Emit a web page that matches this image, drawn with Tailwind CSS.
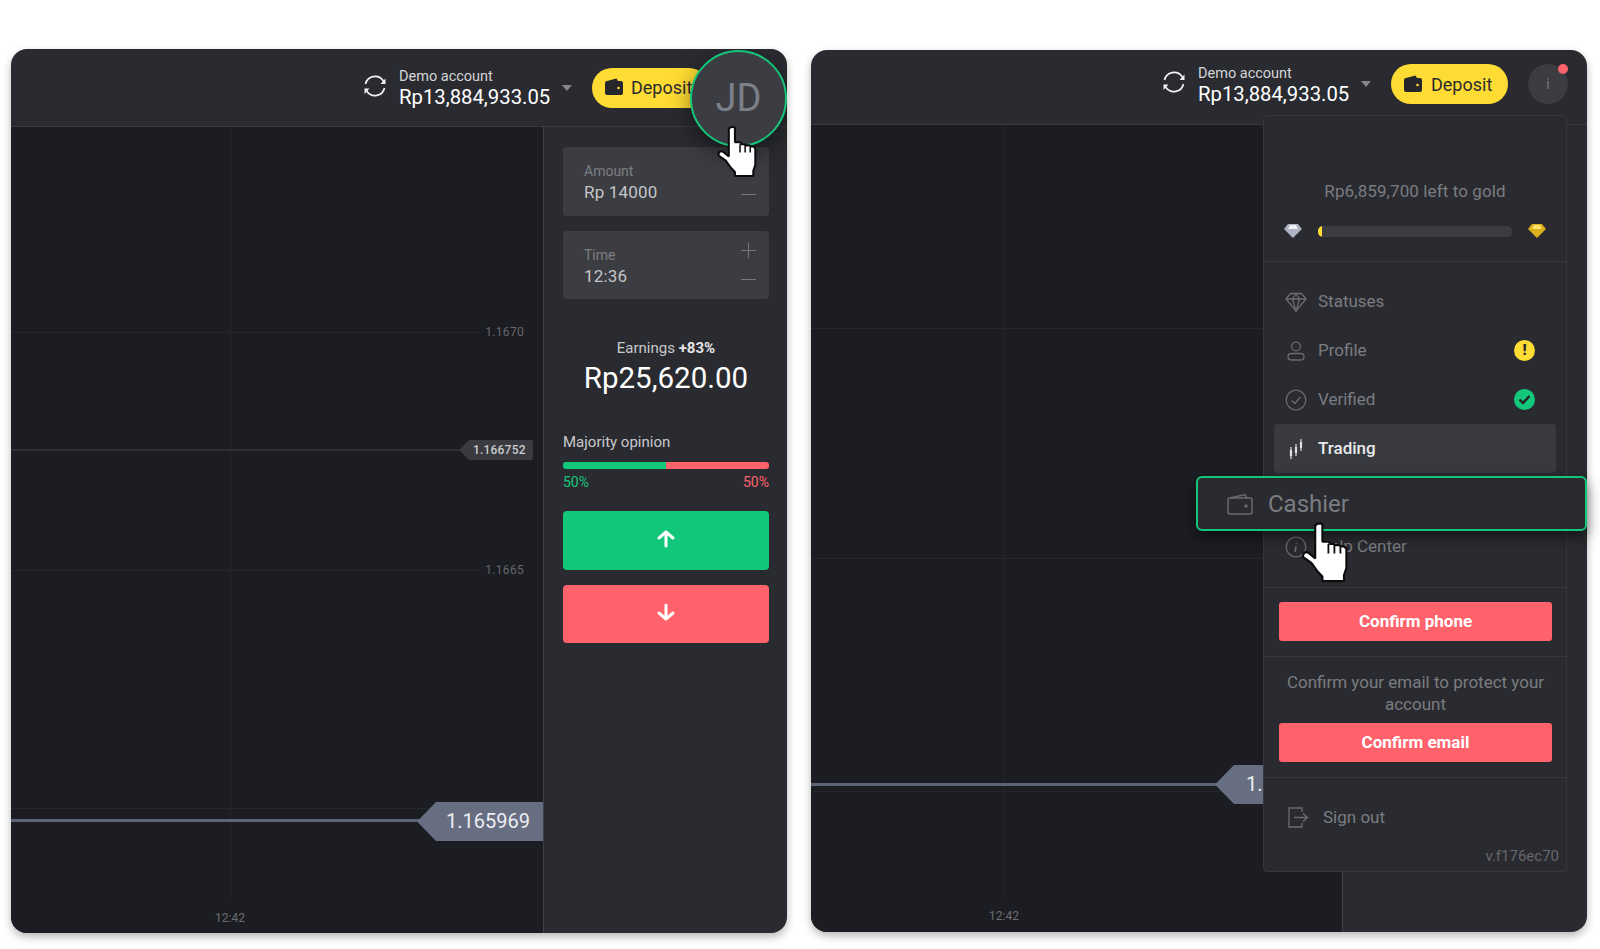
<!DOCTYPE html>
<html lang="en">
<head>
    <meta charset="UTF-8">
    <meta name="viewport" content="width=device-width, initial-scale=1.0">
    <title>Trading menu</title>
    <script src="https://cdn.jsdelivr.net/npm/@tailwindcss/browser@4"></script>
</head>
<body class="bg-white font-['Roboto',sans-serif] overflow-hidden">
<div class="w-[1600px] h-[949px] pt-[49px] pl-[11px] flex items-start gap-[24px]">

    <!-- Left panel -->
    <section class="relative w-[776px] h-[884px] rounded-[16px] bg-[#2a2b30] flex flex-col overflow-hidden shrink-0 shadow-[0_4px_8px_rgba(0,0,0,0.28)]">
        <header class="h-[78px] shrink-0 border-b border-[#3a3b40] flex items-center justify-end pr-[18px]">
            <svg class="w-[26px] h-[26px] mr-[11px] -mt-[3px]" viewBox="0 0 26 26" fill="none" stroke="#f2f2f3" stroke-width="1.7"><path d="M3.5 11A9.8 9.8 0 0 1 21 7.5L22.5 10M22.5 15A9.8 9.8 0 0 1 5 18.5L3.500 16"/><path d="M23.500 5.500V11H18.500M2.500 21V15.500H7.500" stroke-width="0" fill="#f2f2f3"/></svg>
            <div class="flex flex-col w-[152px] mt-[2px]">
                <span class="text-[14.500px] leading-[17px] text-[#d4d5d8]">Demo account</span>
                <span class="text-[20.300px] leading-[24px] text-white whitespace-nowrap">Rp13,884,933.05</span>
            </div>
            <div class="w-0 h-0 ml-[11px] mr-[20px] border-x-[5.500px] border-x-transparent border-t-[6px] border-t-[#85868b]"></div>
            <button class="w-[117px] h-[40px] rounded-[20px] bg-[#ffdc33] flex items-center pl-[13px] gap-[8px] text-[18px] text-[#2a2b30]">
                <svg class="w-[18px] h-[17px] -mt-[3px]" viewBox="0 0 18 17" fill="#26272b"><path d="M2 3 11.500 .5 13 3H16a2 2 0 0 1 2 2v10a2 2 0 0 1-2 2H2a2 2 0 0 1-2-2V5a2 2 0 0 1 2-2Z"/><circle cx="13.500" cy="10" r="1.300" fill="#ffdc33"/></svg>
                Deposit
            </button>
            <div class="w-[40px] h-[40px] ml-[20px]"></div>
        </header>
        <div class="flex-1 flex min-h-0">
            <!-- chart area -->
            <div class="relative w-[532px] bg-[#1c1d22] overflow-hidden">
                <div class="absolute left-[219px] top-0 w-px h-[770px] bg-[#26272c]"></div>
                <div class="absolute left-0 top-[205px] w-[469px] h-px bg-[#26272c]"></div>
                <div class="absolute left-0 top-[443px] w-[469px] h-px bg-[#26272c]"></div>
                <div class="absolute left-0 top-[681px] w-[469px] h-px bg-[#26272c]"></div>
                <span class="absolute right-[19px] top-[197px] text-[12px] leading-[16px] tracking-[0.3px] text-[#66676c]">1.1670</span>
                <span class="absolute right-[19px] top-[435px] text-[12px] leading-[16px] tracking-[0.3px] text-[#66676c]">1.1665</span>
                <div class="absolute left-0 top-[322px] w-[450px] h-[2px] bg-[#303136]"></div>
                <div class="absolute left-[448px] top-[313px] w-[74px] h-[20px] pl-[14px] bg-[#3a3b40] rounded-r-[2px] text-[12px] leading-[20px] font-medium tracking-[0.2px] text-[#c9cacd] [clip-path:polygon(10px_0,100%_0,100%_100%,10px_100%,0_50%)]">1.166752</div>
                <div class="absolute left-0 top-[692px] w-[410px] h-[3px] bg-[#5d6377]"></div>
                <div class="absolute left-[406px] top-[675px] w-[126px] h-[39px] pl-[29px] bg-[#686e82] text-[20px] leading-[39px] text-[#eceef2] [clip-path:polygon(19px_0,100%_0,100%_100%,19px_100%,0_50%)]">1.165969</div>
                <span class="absolute left-[199px] top-[783px] w-[40px] text-center text-[12px] leading-[16px] text-[#6c6d72]">12:42</span>
            </div>
            <!-- order sidebar -->
            <aside class="flex-1 border-l border-[#3f4045] pt-[20px] pl-[19px] pr-[18px] flex flex-col">
                <div class="relative h-[69px] rounded-[4px] bg-[#3c3d42] pl-[21px] pt-[15px]">
                    <div class="text-[14px] leading-[18px] text-[#7c7d82]">Amount</div>
                    <div class="text-[17px] leading-[24px] text-[#c4c5c8] tracking-[0.2px]">Rp 14000</div>
                    <div class="absolute right-[13px] top-[47px] w-[15px] h-px bg-[#77787d]"></div>
                </div>
                <div class="relative h-[68px] mt-[15px] rounded-[4px] bg-[#3c3d42] pl-[21px] pt-[15px]">
                    <div class="text-[14px] leading-[18px] text-[#7c7d82]">Time</div>
                    <div class="text-[17px] leading-[24px] text-[#c4c5c8] tracking-[0.2px]">12:36</div>
                    <div class="absolute right-[13px] top-[19px] w-[15px] h-px bg-[#77787d]"></div>
                    <div class="absolute right-[20px] top-[12px] w-px h-[15px] bg-[#77787d]"></div>
                    <div class="absolute right-[13px] top-[48px] w-[15px] h-px bg-[#77787d]"></div>
                </div>
                <div class="mt-[39px] text-center text-[15px] leading-[20px] text-[#c8c9cc]">Earnings <b class="font-bold text-[#e4e5e7]">+83%</b></div>
                <div class="mt-[2px] text-center text-[29.500px] leading-[36px] text-white">Rp25,620.00</div>
                <div class="mt-[36px] text-[15px] leading-[20px] text-[#c8c9cc]">Majority opinion</div>
                <div class="mt-[10px] h-[7px] rounded-[3px] overflow-hidden flex">
                    <div class="w-1/2 bg-[#13c77a]"></div>
                    <div class="w-1/2 bg-[#ff626b]"></div>
                </div>
                <div class="mt-[4px] flex justify-between text-[14px] leading-[18px]">
                    <span class="text-[#13c77a]">50%</span>
                    <span class="text-[#ff626b]">50%</span>
                </div>
                <button class="mt-[20px] h-[59px] rounded-[4px] bg-[#13c77a] flex items-center justify-center">
                    <svg class="w-[20px] h-[20px] -mt-[4px]" viewBox="0 0 20 20" fill="none" stroke="#fff" stroke-width="3" stroke-linecap="round" stroke-linejoin="round"><path d="M10 17V3M3 9l7-6 7 6"/></svg>
                </button>
                <button class="mt-[15px] h-[58px] rounded-[4px] bg-[#ff626b] flex items-center justify-center">
                    <svg class="w-[20px] h-[20px] -mt-[4px]" viewBox="0 0 20 20" fill="none" stroke="#fff" stroke-width="3" stroke-linecap="round" stroke-linejoin="round"><path d="M10 3v14M3 11l7 6 7-6"/></svg>
                </button>
            </aside>
        </div>
        <!-- enlarged avatar callout -->
        <div class="absolute left-[679px] top-[1px] w-[97px] h-[97px] rounded-full bg-[#3c3d42] border-2 border-[#13c77a] flex items-center justify-center text-[38px] text-[#7c8088] shadow-[0_8px_24px_rgba(0,0,0,0.45)]">JD</div>
        <svg class="absolute left-[706px] top-[77px] w-[42px] h-[52px]" viewBox="0 0 40 51" fill="#fff" stroke="#0c0c0e" stroke-width="2" stroke-linejoin="bevel"><path d="M12 2L13 1H16L17 2V16H22L23 17V18H26L28 19H31L33 20H35L37 22V38L35 44V49H17V45L13 41L8 34L1 29V27L2 25H5L11 30V2Z"/><path d="M22 18V26M27 19V26M32 20V26" stroke-width="1.500"/></svg>
    </section>

    <!-- Right panel -->
    <section class="relative w-[776px] h-[882px] mt-px rounded-[16px] bg-[#2a2b30] flex flex-col shrink-0 shadow-[0_4px_8px_rgba(0,0,0,0.28)]">
        <header class="h-[75px] shrink-0 border-b border-[#3a3b40] flex items-center justify-end pr-[19px]">
            <svg class="w-[26px] h-[26px] mr-[11px] -mt-[11px]" viewBox="0 0 26 26" fill="none" stroke="#f2f2f3" stroke-width="1.7"><path d="M3.5 11A9.8 9.8 0 0 1 21 7.5L22.500 10M22.500 15A9.8 9.8 0 0 1 5 18.500L3.500 16"/><path d="M23.500 5.500V11H18.500M2.500 21V15.500H7.500" stroke-width="0" fill="#f2f2f3"/></svg>
            <div class="flex flex-col w-[152px] -mt-[3px]">
                <span class="text-[14.500px] leading-[17px] text-[#d4d5d8]">Demo account</span>
                <span class="text-[20.300px] leading-[24px] text-white whitespace-nowrap">Rp13,884,933.05</span>
            </div>
            <div class="w-0 h-0 ml-[11px] mr-[20px] -mt-[6px] border-x-[5.500px] border-x-transparent border-t-[6px] border-t-[#85868b]"></div>
            <button class="w-[117px] h-[40px] -mt-[6px] rounded-[20px] bg-[#ffdc33] flex items-center pl-[13px] gap-[9px] text-[18px] text-[#2a2b30]">
                <svg class="w-[18px] h-[17px] -mt-[2px]" viewBox="0 0 18 17" fill="#26272b"><path d="M2 3 11.500 .5 13 3H16a2 2 0 0 1 2 2v10a2 2 0 0 1-2 2H2a2 2 0 0 1-2-2V5a2 2 0 0 1 2-2Z"/><circle cx="13.500" cy="10" r="1.300" fill="#ffdc33"/></svg>
                Deposit
            </button>
            <div class="relative w-[40px] h-[40px] ml-[20px] -mt-[6px] rounded-full bg-[#3c3d42] flex items-center justify-center text-[14px] text-[#77787d]">
                i
                <span class="absolute right-[0px] top-0 w-[10px] h-[10px] rounded-full bg-[#ff626b]"></span>
            </div>
        </header>
        <div class="flex-1 flex min-h-0">
            <div class="relative w-[531px] bg-[#1c1d22] rounded-bl-[16px] overflow-hidden">
                <div class="absolute left-[193px] top-0 w-px h-[772px] bg-[#26272c]"></div>
                <div class="absolute left-0 top-[203px] w-full h-px bg-[#26272c]"></div>
                <div class="absolute left-0 top-[433px] w-full h-px bg-[#26272c]"></div>
                <div class="absolute left-0 top-[666px] w-full h-px bg-[#26272c]"></div>
                <div class="absolute left-0 top-[658px] w-[410px] h-[3px] bg-[#5d6377]"></div>
                <div class="absolute left-[404px] top-[640px] w-[127px] h-[39px] pl-[31px] bg-[#686e82] text-[20px] leading-[39px] text-[#eceef2] [clip-path:polygon(19px_0,100%_0,100%_100%,19px_100%,0_50%)]">1.165969</div>
                <span class="absolute left-[173px] top-[783px] w-[40px] text-center text-[12px] leading-[16px] text-[#6c6d72]">12:42</span>
            </div>
            <div class="flex-1 border-l border-[#3f4045]"></div>
        </div>

        <!-- account dropdown -->
        <div class="absolute left-[452px] top-[65px] w-[304px] h-[757px] rounded-[4px] bg-[#2a2b30] border border-[#37383d] flex flex-col text-[#7b7c81]">
            <div class="h-[146px] shrink-0 border-b border-[#37383d] pt-[63px]">
                <div class="text-center text-[17px] leading-[24px] tracking-[0.1px]">Rp6,859,700 left to gold</div>
                <div class="mt-[21px] flex items-center px-[20px]">
                    <svg class="w-[18px] h-[14px]" viewBox="0 0 18 14"><path d="M4 0H14L18 5 9 14 0 5Z" fill="#aeb4c2"/><path d="M6 1H12L14 5H4Z" fill="#eef0f4"/></svg>
                    <div class="w-[195px] h-[11px] ml-[16px] mr-[16px] rounded-[5px] bg-[#3c3d42] overflow-hidden"><div class="w-[4px] h-full bg-[#ffdc33]"></div></div>
                    <svg class="w-[18px] h-[14px]" viewBox="0 0 18 14"><path d="M4 0H14L18 5 9 14 0 5Z" fill="#dcb01c"/><path d="M6 1H12L14 5H4Z" fill="#ffe36a"/></svg>
                </div>
            </div>
            <nav class="h-[326px] shrink-0 border-b border-[#37383d] pt-[15px] px-[10px] text-[17px]">
                <div class="h-[49px] flex items-center pl-[11px] gap-[11px]">
                    <svg class="w-[22px] h-[20px]" viewBox="0 0 22 20" fill="none" stroke="#6a6b70" stroke-width="1.300" stroke-linejoin="round"><path d="M5.500 1.500H16.500L21 7 11 19 1 7Z"/><path d="M1 7H21M7.500 7 11 19 14.500 7 11 1.500 7.500 7Z"/></svg>
                    <span>Statuses</span>
                </div>
                <div class="h-[49px] flex items-center pl-[11px] gap-[11px]">
                    <svg class="w-[22px] h-[20px]" viewBox="0 0 22 20" fill="none" stroke="#6a6b70" stroke-width="1.300"><circle cx="11" cy="5.500" r="4.300"/><rect x="3" y="12.500" width="16" height="6.500" rx="3.200"/></svg>
                    <span>Profile</span>
                    <span class="ml-auto mr-[21px] w-[21px] h-[21px] rounded-full bg-[#ffdc33] flex items-center justify-center text-[15px] font-black leading-none text-[#2a2b30]">!</span>
                </div>
                <div class="h-[49px] flex items-center pl-[11px] gap-[11px]">
                    <svg class="w-[22px] h-[22px]" viewBox="0 0 22 22" fill="none" stroke="#6a6b70" stroke-width="1.300"><circle cx="11" cy="11" r="9.800"/><path d="M6.500 11.500 9.800 14.500 15.500 8"/></svg>
                    <span>Verified</span>
                    <span class="ml-auto mr-[21px] w-[21px] h-[21px] rounded-full bg-[#13c77a] flex items-center justify-center">
                        <svg class="w-[13px] h-[11px]" viewBox="0 0 13 11" fill="none" stroke="#1f2024" stroke-width="2.400"><path d="M1.500 5.500 5 9 11.500 2"/></svg>
                    </span>
                </div>
                <div class="h-[49px] flex items-center pl-[11px] gap-[11px] rounded-[4px] bg-[#393a40] text-[#e8e9eb] font-medium">
                    <svg class="w-[22px] h-[22px]" viewBox="0 0 22 22" fill="none" stroke="#e0e1e3" stroke-width="1.200"><path d="M6 9V21M11 6V18M16 1V13"/><path d="M6 12V18M11 9V15M16 4V10" stroke-width="2.200"/></svg>
                    <span>Trading</span>
                </div>
                <div class="h-[49px]"></div>
                <div class="h-[49px] flex items-center pl-[11px] gap-[11px]">
                    <svg class="w-[22px] h-[22px]" viewBox="0 0 22 22" fill="none" stroke="#6a6b70" stroke-width="1.300"><circle cx="11" cy="11" r="9.800"/><path d="M11.500 6.500V7.500M11 10 10.200 16" stroke-width="1.600"/></svg>
                    <span>Help Center</span>
                </div>
            </nav>
            <div class="h-[69px] shrink-0 border-b border-[#37383d] pl-[15px] pr-[14px] pt-[14px]">
                <button class="w-full h-[39px] rounded-[3px] bg-[#ff626b] text-[17px] font-bold text-white">Confirm phone</button>
            </div>
            <div class="h-[121px] shrink-0 border-b border-[#37383d] pl-[15px] pr-[14px] pt-[14px] text-center">
                <p class="text-[17px] leading-[22px]">Confirm your email to protect your account</p>
                <button class="mt-[8px] w-full h-[39px] rounded-[3px] bg-[#ff626b] text-[17px] font-bold text-white">Confirm email</button>
            </div>
            <div class="flex-1 flex flex-col">
                <div class="mt-[27px] flex items-center pl-[24px] gap-[14px] text-[17px] leading-[24px]">
                    <svg class="w-[21px] h-[21px]" viewBox="0 0 21 21" fill="none" stroke="#6a6b70" stroke-width="1.300"><path d="M14 5V1H1V20H14V16"/><path d="M6 10.500H19M15 6.500 19.500 10.500 15 14.500"/></svg>
                    <span>Sign out</span>
                </div>
                <div class="mt-[18px] pr-[7px] text-right text-[15px] leading-[18px] text-[#66676c]">v.f176ec70</div>
            </div>
        </div>

        <!-- enlarged Cashier row callout -->
        <div class="absolute left-[385px] top-[426px] w-[391px] h-[55px] rounded-[6px] bg-[#2a2b30] border-2 border-[#13c77a] flex items-center pl-[29px] gap-[15px] text-[24px] text-[#7b7c81] shadow-[0_6px_14px_rgba(0,0,0,0.5)]">
            <svg class="w-[26px] h-[22px]" viewBox="0 0 26 22" fill="none" stroke="#6a6b70" stroke-width="1.500"><path d="M3 5 18 1.500 20 5"/><rect x="1" y="5" width="24" height="16" rx="2"/><circle cx="19" cy="13" r="1" fill="#6a6b70"/></svg>
            <span>Cashier</span>
        </div>
        <svg class="absolute left-[491px] top-[472px] w-[48px] h-[62px]" viewBox="0 0 40 51" fill="#fff" stroke="#0c0c0e" stroke-width="1.800" stroke-linejoin="bevel"><path d="M12 2L13 1H16L17 2V16H22L23 17V18H26L28 19H31L33 20H35L37 22V38L35 44V49H17V45L13 41L8 34L1 29V27L2 25H5L11 30V2Z"/><path d="M22 18V26M27 19V26M32 20V26" stroke-width="1.500"/></svg>
    </section>
</div>
</body>
</html>
